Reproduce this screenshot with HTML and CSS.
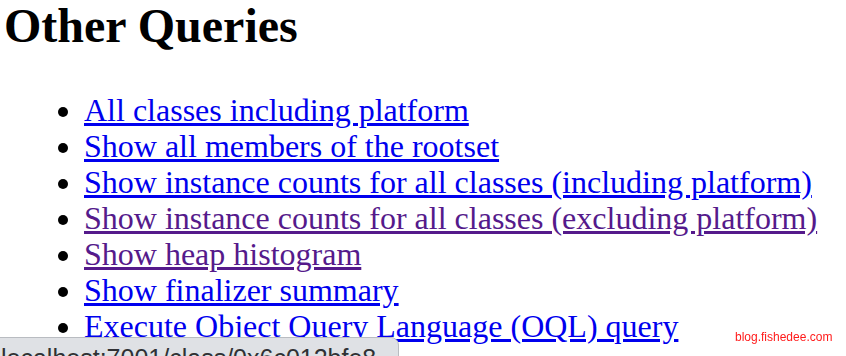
FILE: index.html
```html
<!DOCTYPE html>
<html>
<head>
    <title>Other Queries</title>
    <link rel="stylesheet" href="styles.css">
</head>
<body>
    <h1>Other Queries</h1>

    <ul class="query-list">
        <li><a href="#all">All classes including platform</a></li>
        <li><a href="#roots">Show all members of the rootset</a></li>
        <li><a href="#counts-incl">Show instance counts for all classes (including platform)</a></li>
        <li><a class="visited" href="#counts-excl">Show instance counts for all classes (excluding platform)</a></li>
        <li><a class="visited" href="#histo">Show heap histogram</a></li>
        <li><a href="#finalizer">Show finalizer summary</a></li>
        <li><a href="#oql">Execute Object Query Language (OQL) query</a></li>
    </ul>

    <!-- 浏览器底部链接提示 -->
    <div class="status-bubble">localhost:7001/class/0x6c012bfe8</div>

    <div class="watermark">blog.fishedee.com</div>
</body>
</html>
```

FILE: styles.css
```css
html, body {
    height: 100%;
    overflow: hidden;
}
body {
    font-family: "Liberation Serif", "Times New Roman", serif;
    font-size: 32px;
    margin: 0;
    padding: 0 0 0 4px;
    background: #fff;
    color: #000;
}
h1 {
    font-size: 48px;
    line-height: 52px;
    margin: 0;
}
.query-list {
    margin: 40px 0 0 0;
    padding-left: 80px;
    line-height: 36px;
}
.query-list a {
    color: #0000ee;
}
.query-list a.visited {
    color: #551a8b;
}
.status-bubble {
    position: fixed;
    left: -1px;
    top: 337px;
    width: 397px;
    height: 40px;
    padding: 6px 0 0 1px;
    background: #dfe1e5;
    border: 1px solid #b9bcc1;
    border-radius: 0 8px 0 0;
    font-family: "Liberation Sans", Arial, sans-serif;
    font-size: 25px;
    color: #303134;
    white-space: nowrap;
}
.watermark {
    position: fixed;
    left: 735px;
    top: 330px;
    font-family: "Liberation Sans", Arial, sans-serif;
    font-size: 12px;
    color: #ff1a1a;
}
```
